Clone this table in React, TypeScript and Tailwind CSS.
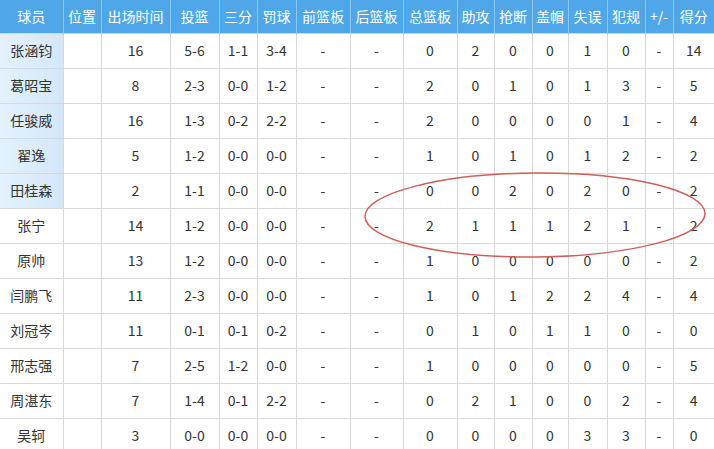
import React from 'react';

const cols = ['球员', '位置', '出场时间', '投篮', '三分', '罚球', '前篮板', '后篮板', '总篮板', '助攻', '抢断', '盖帽', '失误', '犯规', '+/-', '得分'];
const widths = [63, 38, 69, 49, 38, 39, 54, 53, 54, 37, 38, 36, 39, 38, 28, 41];

const rows: [string, boolean, string[]][] = [
  ['张涵钧', true, ['', '16', '5-6', '1-1', '3-4', '-', '-', '0', '2', '0', '0', '1', '0', '-', '14']],
  ['葛昭宝', true, ['', '8', '2-3', '0-0', '1-2', '-', '-', '2', '0', '1', '0', '1', '3', '-', '5']],
  ['任骏威', true, ['', '16', '1-3', '0-2', '2-2', '-', '-', '2', '0', '0', '0', '0', '1', '-', '4']],
  ['翟逸', true, ['', '5', '1-2', '0-0', '0-0', '-', '-', '1', '0', '1', '0', '1', '2', '-', '2']],
  ['田桂森', true, ['', '2', '1-1', '0-0', '0-0', '-', '-', '0', '0', '2', '0', '2', '0', '-', '2']],
  ['张宁', false, ['', '14', '1-2', '0-0', '0-0', '-', '-', '2', '1', '1', '1', '2', '1', '-', '2']],
  ['原帅', false, ['', '13', '1-2', '0-0', '0-0', '-', '-', '1', '0', '0', '0', '0', '0', '-', '2']],
  ['闫鹏飞', false, ['', '11', '2-3', '0-0', '0-0', '-', '-', '1', '0', '1', '2', '2', '4', '-', '4']],
  ['刘冠岑', false, ['', '11', '0-1', '0-1', '0-2', '-', '-', '0', '1', '0', '1', '1', '0', '-', '0']],
  ['邢志强', false, ['', '7', '2-5', '1-2', '0-0', '-', '-', '1', '0', '0', '0', '0', '0', '-', '5']],
  ['周湛东', false, ['', '7', '1-4', '0-1', '2-2', '-', '-', '0', '2', '1', '0', '0', '2', '-', '4']],
  ['吴轲', false, ['', '3', '0-0', '0-0', '0-0', '-', '-', '0', '0', '0', '0', '3', '3', '-', '0']],
];

export default function App() {
  return (
    <div className="relative w-[714px] h-[449px] overflow-hidden bg-white font-['Noto_Sans_CJK_SC','Noto_Sans',sans-serif] text-[14px] text-[#333]">
      <table className="table-fixed border-collapse w-[714px]">
        <colgroup>
          {widths.map((w, i) => (
            <col key={i} style={{ width: w }} />
          ))}
        </colgroup>
        <thead>
          <tr className="h-[33px] bg-[#4fa7ea] text-white">
            {cols.map((c) => (
              <th key={c} className="font-normal text-center border-r border-[#8ec8f2] last:border-r-0 px-0 whitespace-nowrap">
                {c}
              </th>
            ))}
          </tr>
        </thead>
        <tbody>
          {rows.map(([name, starter, vals]) => (
            <tr key={name} className="h-[35px]">
              <td className={`text-center border border-[#d8d8d8] border-l-0 ${starter ? 'bg-gradient-to-r from-[#e4f1fd] to-[#d3e7f9]' : 'bg-white'}`}>
                {name}
              </td>
              {vals.map((v, i) => (
                <td key={i} className="text-center border border-[#d8d8d8] last:border-r-0">
                  {v}
                </td>
              ))}
            </tr>
          ))}
        </tbody>
      </table>
      <svg className="absolute left-0 top-0 pointer-events-none" width="714" height="449">
        <ellipse cx="535" cy="215" rx="170" ry="42" fill="none" stroke="#cf5f5a" strokeWidth="1.5" transform="rotate(-0.5 535 215)" />
      </svg>
    </div>
  );
}
